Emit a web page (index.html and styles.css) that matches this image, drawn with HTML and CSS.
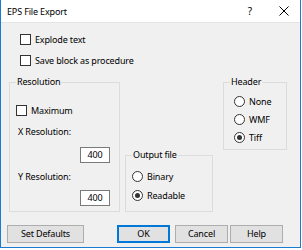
FILE: index.html
```html
<!DOCTYPE html>
<html>
<head>
<meta charset="utf-8">
<link rel="stylesheet" href="styles.css">
</head>
<body>
<div class="window">
  <div class="titlebar">
    <span class="title">EPS File Export</span>
    <span class="help">?</span>
    <svg class="close" width="10" height="10" viewBox="0 0 10 10"><path d="M0.5 0.5L9.5 9.5M9.5 0.5L0.5 9.5" stroke="#000" stroke-width="1" fill="none"/></svg>
  </div>
  <div class="client">
    <div class="check top"><span class="box"></span><span>Explode text</span></div>
    <div class="check top"><span class="box"></span><span>Save block as procedure</span></div>
    <div class="groups">
      <div class="group res">
        <span class="group-title">Resolution</span>
        <div class="check max"><span class="box"></span><span>Maximum</span></div>
        <div class="field-label lx">X Resolution:</div>
        <div class="edit e1">400</div>
        <div class="field-label ly">Y Resolution:</div>
        <div class="edit e2">400</div>
      </div>
      <div class="group out">
        <span class="group-title">Output file</span>
        <div class="radio-row"><span class="radio"></span><span>Binary</span></div>
        <div class="radio-row"><span class="radio on"></span><span>Readable</span></div>
      </div>
      <div class="group hdr">
        <span class="group-title">Header</span>
        <div class="radio-row"><span class="radio"></span><span>None</span></div>
        <div class="radio-row"><span class="radio"></span><span>WMF</span></div>
        <div class="radio-row"><span class="radio on"></span><span>Tiff</span></div>
      </div>
    </div>
    <div class="buttons">
      <div class="btn defaults">Set Defaults</div>
      <div class="btn ok">OK</div>
      <div class="btn cancel">Cancel</div>
      <div class="btn helpbtn">Help</div>
    </div>
  </div>
</div>
</body>
</html>
```

FILE: styles.css
```css
* { box-sizing: border-box; }
body {
  margin: 0;
  background: #fff;
  font-family: "Noto Sans", "Liberation Sans", sans-serif;
  font-size: 9px;
  letter-spacing: -0.15px;
  color: #000;
}
.window {
  width: 301px;
  height: 248px;
  border: 1px solid #1a7bd1;
  border-top: 0;
  background: #f0f0f0;
  display: flex;
  flex-direction: column;
}
.titlebar {
  height: 23px;
  flex: none;
  background: #fff;
  border-bottom: 1px solid #e4e4e4;
  display: flex;
  align-items: center;
  padding-left: 6px;
}
.help { margin-left: auto; margin-right: 27px; font-size: 10px; }
.close { margin-right: 11px; }
.client {
  display: flex;
  flex-direction: column;
  padding-top: 6px;
}
.check {
  display: flex;
  align-items: center;
  gap: 4px;
  height: 21px;
}
.check.top { padding-left: 19px; }
.box {
  width: 11px;
  height: 11px;
  border: 1px solid #333;
  background: #fff;
  flex: none;
}
.groups {
  display: flex;
  align-items: flex-start;
  margin-top: 11px;
  padding-left: 8px;
}
.group {
  position: relative;
  border: 1px solid #dcdcdc;
  display: flex;
  flex-direction: column;
}
.group-title {
  position: absolute;
  top: -7px;
  left: 6px;
  line-height: 12px;
  padding: 0 1px;
  background: #f0f0f0;
}
.res {
  width: 111px;
  height: 130px;
  padding: 17px 9px 0 6px;
}
.max { height: 20px; }
.field-label {
  height: 14px;
  line-height: 14px;
  padding-left: 2px;
}
.lx { margin-top: 5px; }
.ly { margin-top: 7px; }
.edit {
  align-self: flex-end;
  width: 30px;
  height: 16px;
  border: 1px solid #7a7a7a;
  background: #fff;
  text-align: center;
  line-height: 14px;
}
.e1 { margin-top: 8px; }
.e2 { margin-top: 6px; }
.out {
  width: 88px;
  height: 57px;
  align-self: flex-end;
  margin-left: 5px;
  padding: 11px 0 0 6px;
}
.hdr {
  width: 64px;
  height: 68px;
  margin-left: 10px;
  padding: 9px 0 0 10px;
}
.radio-row {
  display: flex;
  align-items: center;
  gap: 4px;
  height: 19px;
}
.hdr .radio-row { height: 18px; }
.radio {
  width: 11px;
  height: 11px;
  border: 1px solid #333;
  border-radius: 50%;
  background: #fff;
  flex: none;
  display: grid;
  place-items: center;
}
.radio.on::after {
  content: "";
  width: 5px;
  height: 5px;
  border-radius: 50%;
  background: #333;
}
.buttons {
  display: flex;
  margin-top: 13px;
  padding-left: 6px;
}
.btn {
  height: 18px;
  border: 1px solid #adadad;
  background: #e1e1e1;
  text-align: center;
  line-height: 16px;
}
.defaults { width: 77px; }
.ok { width: 53px; margin-left: 33px; border: 2px solid #0078d7; line-height: 14px; }
.cancel { width: 53px; margin-left: 5px; }
.helpbtn { width: 53px; margin-left: 2px; }
```
